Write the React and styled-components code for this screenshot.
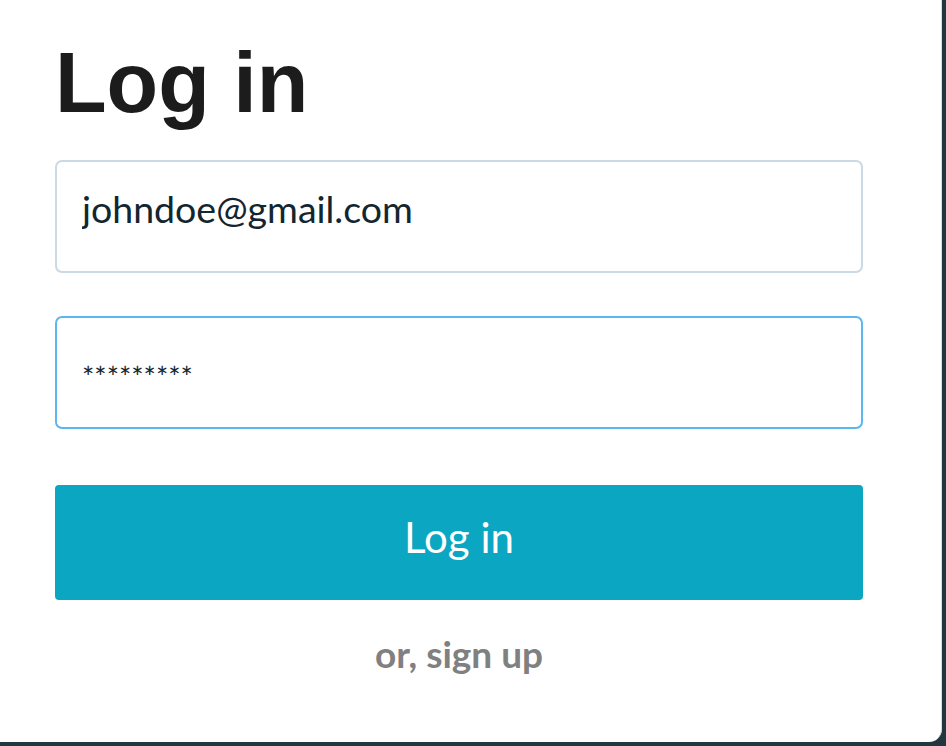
import styled, { createGlobalStyle } from "styled-components";

const GlobalStyle = createGlobalStyle`
  body {
    margin: 0;
    background: #22363f;
    font-family: Lato, "Noto Sans", sans-serif;
  }
`;

const Card = styled.div`
  box-sizing: border-box;
  width: 942px;
  height: 742px;
  background: #ffffff;
  border-right: 1px solid #dcdcdc;
  border-bottom-right-radius: 13px;
  padding: 41px 0 0 55px;
`;

const Form = styled.form`
  width: 808px;
  display: flex;
  flex-direction: column;
`;

const Title = styled.h1`
  margin: 0 0 34px 0;
  font-family: "Liberation Sans", Arial, sans-serif;
  font-weight: 700;
  font-size: 84.5px;
  line-height: 1;
  color: #1c1c1c;
`;

const Field = styled.input`
  box-sizing: border-box;
  width: 100%;
  height: 113px;
  margin: 0 0 ${(p) => p.$gap}px 0;
  padding: ${(p) => p.$top || 0}px 24px ${(p) => p.$bottom || 0}px 25px;
  border: 2px solid ${(p) => (p.$focused ? "#5cb6ef" : "#c9d9e5")};
  border-radius: 7px;
  background: #ffffff;
  font-family: Lato, "Noto Sans", sans-serif;
  font-size: ${(p) => p.$size}px;
  color: #13262f;
  outline: none;
`;

const Submit = styled.button`
  width: 100%;
  height: 115px;
  padding: 0 0 10px 0;
  border: none;
  border-radius: 4px;
  background: #0ba7c2;
  color: #ffffff;
  font-family: Lato, "Noto Sans", sans-serif;
  font-size: 42px;
  cursor: pointer;
`;

const SignUp = styled.a`
  align-self: center;
  margin-top: 32px;
  font-family: Lato, "Noto Sans", sans-serif;
  font-weight: 700;
  font-size: 37px;
  line-height: 1.2;
  color: #808080;
  text-decoration: none;
`;

export default function App() {
  return (
    <>
      <GlobalStyle />
      <Card>
        <Form onSubmit={(e) => e.preventDefault()}>
          <Title>Log in</Title>
          <Field
            $gap={43}
            $size={37.5}
            $bottom={16}
            defaultValue="johndoe@gmail.com"
          />
          <Field
            $gap={56}
            $size={29}
            $top={8}
            $focused
            defaultValue="*********"
          />
          <Submit type="submit">Log in</Submit>
          <SignUp href="#">or, sign up</SignUp>
        </Form>
      </Card>
    </>
  );
}
